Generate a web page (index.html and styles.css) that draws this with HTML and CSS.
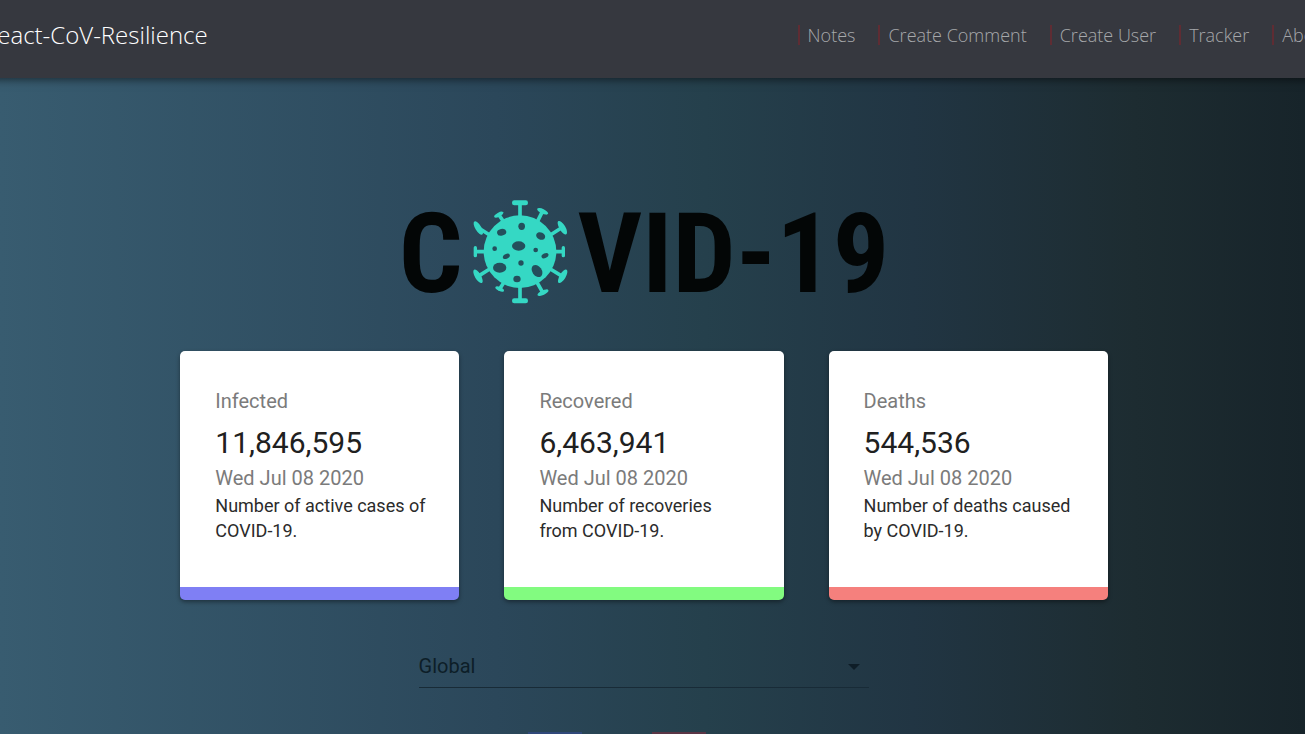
FILE: index.html
```html
<!DOCTYPE html>
<html lang="en">
<head>
<meta charset="utf-8">
<meta name="viewport" content="width=device-width, initial-scale=1">
<title>React-CoV-Resilience</title>
<link rel="stylesheet" href="styles.css">
</head>
<body>
<header class="navbar">
  <a class="brand" href="#">React-CoV-Resilience</a>
  <nav class="links" aria-label="Main">
    <a class="link" href="#">Notes</a>
    <a class="link" href="#">Create Comment</a>
    <a class="link" href="#">Create User</a>
    <a class="link" href="#">Tracker</a>
    <a class="link" href="#">About</a>
  </nav>
</header>
<main class="page">
  <h1 class="logo">
    <span>C</span>
    <svg class="virus" viewBox="0 0 345 345" role="img" aria-label="O">
      <g stroke="#35d8c4" stroke-width="11" stroke-linecap="round">
        <path d="M171 70V24M171 270V317M70 170H40M275 170H300M80 120L47 99M262 120L296 98M80 222L45 244M262 222L298 244M123 82L108 60M222 82L238 50M123 262L110 282M222 262L239 292"/>
      </g>
      <g fill="#35d8c4">
        <circle cx="171" cy="170" r="109"/>
        <rect x="147" y="16" width="48" height="15" rx="7"/>
        <rect x="147" y="310" width="48" height="15" rx="7"/>
        <rect x="32" y="153" width="10" height="34" rx="5"/>
        <rect x="296" y="153" width="10" height="34" rx="5"/>
        <ellipse cx="46" cy="99" rx="9" ry="23" transform="rotate(-31 46 99)"/>
        <ellipse cx="298" cy="98" rx="9" ry="23" transform="rotate(-31 298 98)"/>
        <ellipse cx="45" cy="244" rx="9" ry="23" transform="rotate(-31 45 244)"/>
        <ellipse cx="299" cy="244" rx="9" ry="23" transform="rotate(31 299 244)"/>
        <ellipse cx="107" cy="59" rx="15" ry="6" transform="rotate(-28 107 59)"/>
        <ellipse cx="239" cy="49" rx="18" ry="7" transform="rotate(25 239 49)"/>
        <ellipse cx="110" cy="282" rx="14" ry="6" transform="rotate(25 110 282)"/>
        <ellipse cx="240" cy="293" rx="18" ry="7" transform="rotate(-25 240 293)"/>
      </g>
      <g fill="#244f5c">
        <ellipse cx="167" cy="153" rx="20" ry="14"/>
        <ellipse cx="110" cy="218" rx="20" ry="15"/>
        <ellipse cx="222" cy="228" rx="14" ry="20" transform="rotate(-35 222 228)"/>
        <ellipse cx="116" cy="112" rx="14" ry="10" transform="rotate(-12 116 112)"/>
        <ellipse cx="233" cy="123" rx="14" ry="11" transform="rotate(25 233 123)"/>
        <ellipse cx="176" cy="94" rx="10" ry="11"/>
        <ellipse cx="162" cy="252" rx="11" ry="10"/>
        <ellipse cx="130" cy="184" rx="11" ry="7" transform="rotate(-25 130 184)"/>
        <ellipse cx="246" cy="182" rx="11" ry="7" transform="rotate(-25 246 182)"/>
        <circle cx="95" cy="161" r="7"/>
        <circle cx="218" cy="165" r="7"/>
        <circle cx="174" cy="204" r="8"/>
      </g>
    </svg>
    <span>VID-19</span>
  </h1>
  <section class="cards">
    <article class="card infected">
      <h2 class="muted">Infected</h2>
      <p class="count">11,846,595</p>
      <p class="muted">Wed Jul 08 2020</p>
      <p class="note">Number of active cases of COVID-19.</p>
    </article>
    <article class="card recovered">
      <h2 class="muted">Recovered</h2>
      <p class="count">6,463,941</p>
      <p class="muted">Wed Jul 08 2020</p>
      <p class="note">Number of recoveries from COVID-19.</p>
    </article>
    <article class="card deaths">
      <h2 class="muted">Deaths</h2>
      <p class="count">544,536</p>
      <p class="muted">Wed Jul 08 2020</p>
      <p class="note">Number of deaths caused by COVID-19.</p>
    </article>
  </section>
  <div class="picker">
    <select class="country" aria-label="Country">
      <option>Global</option>
    </select>
    <svg class="arrow" viewBox="0 0 12 6" aria-hidden="true"><path d="M0 0h12L6 6z"/></svg>
  </div>
  <div class="legend" aria-hidden="true">
    <i class="swatch blue"></i>
    <i class="swatch red"></i>
  </div>
</main>
</body>
</html>
```
FILE: styles.css
```css
* { box-sizing: border-box; }

body {
  margin: 0;
  height: 100vh;
  display: flex;
  flex-direction: column;
  overflow: hidden;
  font-family: Roboto, "Liberation Sans", sans-serif;
  background: linear-gradient(to right, #385c70 0%, #2b475a 38%, #25404c 54%, #213543 70%, #1d2c31 87%, #17242a 100%);
}

h1, h2, p { margin: 0; font-weight: 400; }

.navbar {
  flex: none;
  display: flex;
  justify-content: space-between;
  align-items: center;
  height: 78px;
  margin: 0 -26px 0 -17px;
  padding-bottom: 9px;
  background: #36383f;
  box-shadow: 0 2px 8px rgba(0, 0, 0, .5);
  font-family: "Open Sans", "Noto Sans", sans-serif;
  font-weight: 300;
  white-space: nowrap;
}

.brand { color: #fff; font-size: 24px; text-decoration: none; }
.links { display: flex; gap: 23px; }
.link { display: flex; align-items: center; gap: 8px; color: #a6a8ab; font-size: 18px; text-decoration: none; }
.link::before { content: ""; width: 2px; height: 20px; background: #5f2c33; }

.page {
  flex: 1;
  display: flex;
  flex-direction: column;
  align-items: center;
  min-height: 0;
  padding: 116px 17px 0 0;
}

.logo {
  flex: none;
  display: flex;
  justify-content: center;
  align-items: center;
  height: 116px;
  color: #030606;
  font-family: "Roboto Condensed", "Liberation Sans Narrow", "Liberation Sans", sans-serif;
  font-size: 112px;
  font-weight: 700;
  line-height: 1;
}
.logo span { padding-top: 4px; }
.virus { width: 115px; height: 115px; }

.cards {
  flex: none;
  display: grid;
  grid-template-columns: repeat(3, 1fr);
  gap: 45px;
  width: 72%;
  margin-top: 41px;
}
.card {
  min-height: 249px;
  padding: 35px 30px 0 35px;
  border-radius: 5px;
  border-bottom: 13px solid;
  background: #fff;
  box-shadow: 0 2px 4px rgba(0, 0, 0, .4);
}
.infected { border-bottom-color: #7f7ff4; }
.recovered { border-bottom-color: #82fb80; }
.deaths { border-bottom-color: #f5807d; }
.muted { color: #7b7b7b; font-size: 20px; line-height: 30px; }
.count { margin: 7px 0 2px; color: #202020; font-size: 30px; line-height: 40px; }
.card p.muted { line-height: 26px; }
.note { margin-top: 2px; color: #2b2b2b; font-size: 18px; line-height: 25px; }

.picker {
  flex: none;
  display: grid;
  align-items: center;
  width: 35%;
  margin-top: 44px;
  border-bottom: 1px solid #182b37;
}
.country, .arrow { grid-area: 1 / 1; }
.country {
  width: 100%;
  height: 43px;
  padding: 0;
  border: 0;
  background: none;
  appearance: none;
  color: #0d1e28;
  font: 400 20px Roboto, sans-serif;
}
.arrow {
  justify-self: end;
  width: 12px;
  height: 6px;
  margin: 3px 9px 0 0;
  fill: #0e1d27;
  pointer-events: none;
}

.legend {
  flex: none;
  display: flex;
  justify-content: center;
  gap: 70px;
  width: 100%;
  margin-top: 44px;
  padding-right: 54px;
}
.swatch { width: 54px; height: 15px; }
.blue { background: #30487a; }
.red { background: #5a3545; }
```
